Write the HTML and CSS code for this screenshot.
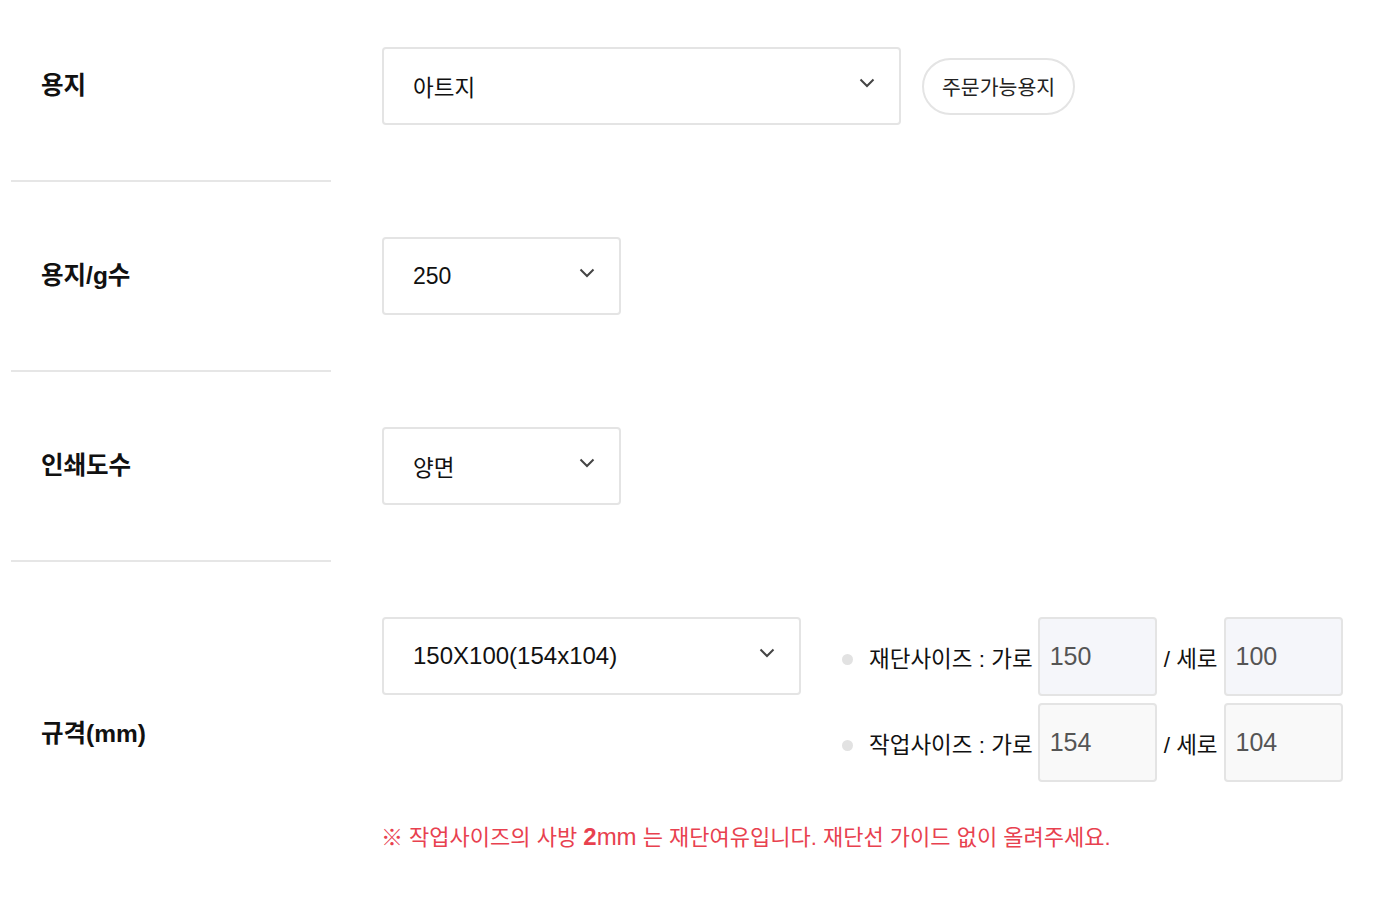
FILE: index.html
```html
<!DOCTYPE html>
<html lang="ko">
<head>
<meta charset="utf-8">
<title>주문 옵션</title>
<link rel="stylesheet" href="styles.css">
</head>
<body>
<div class="form">
  <div class="row row-first">
    <div class="label-cell"><span class="label">용지</span></div>
    <div class="field-cell">
      <div class="line">
        <div class="select w518"><span class="val">아트지</span><svg class="chev" viewBox="0 0 16 10" width="16" height="10"><path d="M1.5 1.5 L8 8 L14.5 1.5" fill="none" stroke="#444" stroke-width="2"/></svg></div>
        <button class="pill">주문가능용지</button>
      </div>
    </div>
  </div>
  <div class="row">
    <div class="label-cell"><span class="label">용지/g수</span></div>
    <div class="field-cell">
      <div class="select w238"><span class="val num">250</span><svg class="chev" viewBox="0 0 16 10" width="16" height="10"><path d="M1.5 1.5 L8 8 L14.5 1.5" fill="none" stroke="#444" stroke-width="2"/></svg></div>
    </div>
  </div>
  <div class="row">
    <div class="label-cell"><span class="label">인쇄도수</span></div>
    <div class="field-cell">
      <div class="select w238"><span class="val">양면</span><svg class="chev" viewBox="0 0 16 10" width="16" height="10"><path d="M1.5 1.5 L8 8 L14.5 1.5" fill="none" stroke="#444" stroke-width="2"/></svg></div>
    </div>
  </div>
  <div class="row row-last">
    <div class="label-cell centered"><span class="label">규격(mm)</span></div>
    <div class="field-cell">
      <div class="line top">
        <div class="select w418"><span class="val num long">150X100(154x104)</span><svg class="chev" viewBox="0 0 16 10" width="16" height="10"><path d="M1.5 1.5 L8 8 L14.5 1.5" fill="none" stroke="#444" stroke-width="2"/></svg></div>
        <div class="sizes">
          <div class="size-line">
            <span class="dot"></span>
            <span class="size-text">재단사이즈 : 가로</span>
            <div class="box cut">150</div>
            <span class="size-text sep">/ 세로</span>
            <div class="box cut">100</div>
          </div>
          <div class="size-line">
            <span class="dot"></span>
            <span class="size-text">작업사이즈 : 가로</span>
            <div class="box work">154</div>
            <span class="size-text sep">/ 세로</span>
            <div class="box work">104</div>
          </div>
        </div>
      </div>
      <p class="note">※ 작업사이즈의 사방 <span class="unit"><b>2</b>mm</span> 는 재단여유입니다. 재단선 가이드 없이 올려주세요.</p>
    </div>
  </div>
</div>
</body>
</html>
```
FILE: styles.css
```css
* { box-sizing: border-box; }
html, body { margin: 0; padding: 0; background: #fff; }
body {
  font-family: "Liberation Sans", "Noto Sans CJK KR", sans-serif;
  color: #111;
}
.form { padding-left: 11px; }
.row { display: flex; align-items: stretch; }
.label-cell {
  width: 320px;
  flex: none;
  padding: 55px 0 55px 30px;
  border-bottom: 2px solid #e6e6e6;
}
.row-first .label-cell, .row-first .field-cell { padding-top: 47px; }
.label {
  display: block;
  height: 78px;
  line-height: 78px;
  font-size: 24.5px;
  font-weight: 700;
  color: #111;
}
.label-cell.centered { display: flex; align-items: center; padding-top: 0; padding-bottom: 0; }
.field-cell { padding: 55px 0 55px 51px; }
.line { display: flex; align-items: center; }
.line.top { align-items: flex-start; }
.select {
  height: 78px;
  border: 2px solid #e4e4e4;
  border-radius: 4px;
  display: flex;
  align-items: center;
  justify-content: space-between;
  padding: 0 24px 0 29px;
  background: #fff;
}
.w518 { width: 519px; }
.w238 { width: 239px; }
.w418 { width: 419px; }
.val { font-size: 22.5px; color: #111; }
.val.num { font-size: 23px; }
.val.num.long { font-size: 24px; }
.chev { margin-top: -6px; }
.pill {
  margin-left: 21px;
  height: 57px;
  padding: 0 18px;
  border: 2px solid #e4e4e4;
  border-radius: 29px;
  background: #fff;
  font-family: "Noto Sans CJK KR", sans-serif;
  font-size: 20.5px;
  color: #222;
}
.sizes { margin-left: 41px; display: flex; flex-direction: column; gap: 7px; }
.size-line { display: flex; align-items: center; height: 79px; }
.dot {
  width: 11px; height: 11px; border-radius: 50%;
  background: #e2e2e2;
  margin-right: 16px;
  margin-top: 6px;
}
.size-text { font-size: 22.5px; color: #111; }
.sep { margin: 0 6px 0 7px; }
.box {
  width: 119px;
  height: 79px;
  margin-left: 5px;
  border: 2px solid #e4e4e4;
  border-radius: 4px;
  padding-left: 10px;
  display: flex;
  align-items: center;
  font-size: 25px;
  color: #555;
}
.sep + .box { margin-left: 0; }
.box.cut { background: #f5f6fa; }
.box.work { background: #f9f9f9; }
.note {
  margin: 40px 0 0 -1px;
  font-size: 22px;
  line-height: 30px;
  color: #e8414f;
}
.unit { font-size: 24px; }
.unit b { font-weight: 700; }
```
